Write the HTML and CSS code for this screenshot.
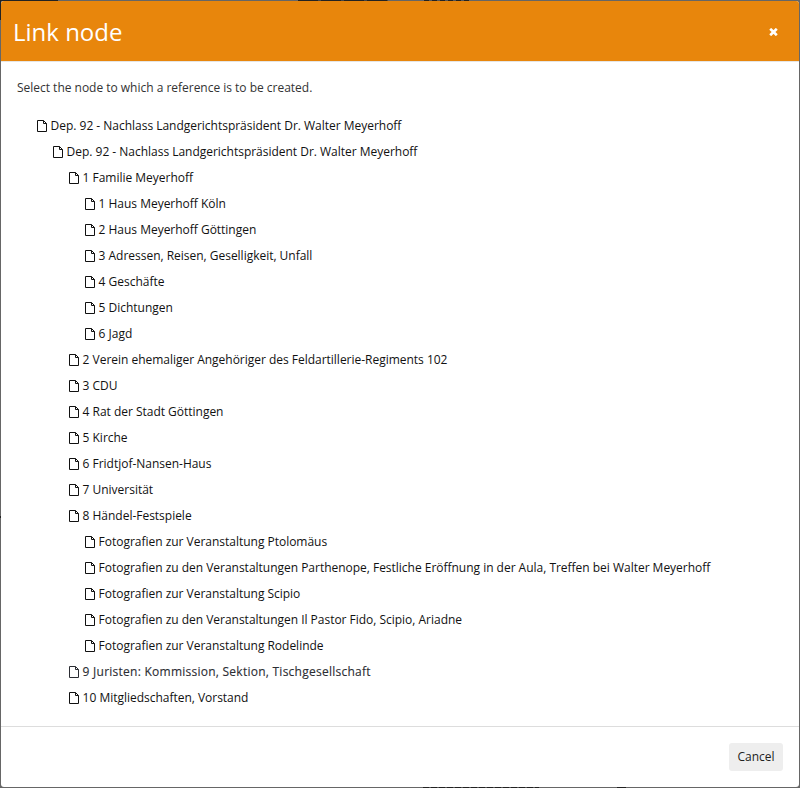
FILE: index.html
```
<!DOCTYPE html>
<html lang="en">
<head>
<meta charset="utf-8">
<title>Link node</title>
<link rel="stylesheet" href="styles.css">
</head>
<body>
<svg width="0" height="0" class="defs"><symbol id="file" viewBox="0 0 10 12"><path d="M.5 .5H6.5L9.5 3.5V11.5H.5ZM6.5 .5V3.5H9.5" fill="none" stroke="currentColor"/></symbol></svg>
<div class="modal">
  <header class="head"><h1>Link node</h1>
    <button class="close" aria-label="Close"><svg width="9" height="8" viewBox="0 0 9 8"><path d="M1.2 .8 7.8 7.2M7.8 .8 1.2 7.2" stroke="#fff" stroke-width="2.7"/></svg></button>
  </header>
  <main class="body">
    <p class="intro">Select the node to which a reference is to be created.</p>
    <ul class="tree">
      <li><a><svg class="icon"><use href="#file"/></svg>Dep. 92 - Nachlass Landgerichtspräsident Dr. Walter Meyerhoff</a>
      <ul><li><a><svg class="icon"><use href="#file"/></svg>Dep. 92 - Nachlass Landgerichtspräsident Dr. Walter Meyerhoff</a>
        <ul>
          <li><a><svg class="icon"><use href="#file"/></svg>1 Familie Meyerhoff</a>
            <ul>
              <li><a><svg class="icon"><use href="#file"/></svg>1 Haus Meyerhoff Köln</a></li>
              <li><a><svg class="icon"><use href="#file"/></svg>2 Haus Meyerhoff Göttingen</a></li>
              <li><a><svg class="icon"><use href="#file"/></svg>3 Adressen, Reisen, Geselligkeit, Unfall</a></li>
              <li><a><svg class="icon"><use href="#file"/></svg>4 Geschäfte</a></li>
              <li><a><svg class="icon"><use href="#file"/></svg>5 Dichtungen</a></li>
              <li><a><svg class="icon"><use href="#file"/></svg>6 Jagd</a></li>
            </ul></li>
          <li><a><svg class="icon"><use href="#file"/></svg>2 Verein ehemaliger Angehöriger des Feldartillerie-Regiments 102</a></li>
          <li><a><svg class="icon"><use href="#file"/></svg>3 CDU</a></li>
          <li><a><svg class="icon"><use href="#file"/></svg>4 Rat der Stadt Göttingen</a></li>
          <li><a><svg class="icon"><use href="#file"/></svg>5 Kirche</a></li>
          <li><a><svg class="icon"><use href="#file"/></svg>6 Fridtjof-Nansen-Haus</a></li>
          <li><a><svg class="icon"><use href="#file"/></svg>7 Universität</a></li>
          <li><a><svg class="icon"><use href="#file"/></svg>8 Händel-Festspiele</a>
            <ul>
              <li><a><svg class="icon"><use href="#file"/></svg>Fotografien zur Veranstaltung Ptolomäus</a></li>
              <li><a><svg class="icon"><use href="#file"/></svg>Fotografien zu den Veranstaltungen Parthenope, Festliche Eröffnung in der Aula, Treffen bei Walter Meyerhoff</a></li>
              <li><a><svg class="icon"><use href="#file"/></svg>Fotografien zur Veranstaltung Scipio</a></li>
              <li><a><svg class="icon"><use href="#file"/></svg>Fotografien zu den Veranstaltungen Il Pastor Fido, Scipio, Ariadne</a></li>
              <li><a><svg class="icon"><use href="#file"/></svg>Fotografien zur Veranstaltung Rodelinde</a></li>
            </ul></li>
          <li><a class="current"><svg class="icon"><use href="#file"/></svg>9 Juristen: Kommission, Sektion, Tischgesellschaft</a></li>
          <li><a><svg class="icon"><use href="#file"/></svg>10 Mitgliedschaften, Vorstand</a></li>
        </ul></li></ul></li>
    </ul>
  </main>
  <footer class="foot"><button class="cancel">Cancel</button></footer>
</div>
</body>
</html>
```
FILE: styles.css
```
* { box-sizing: border-box; }
body {
  margin: 0; height: 788px; padding: 1px; overflow: hidden;
  font: 12px/26px "Open Sans", sans-serif; color: #111;
  background:
    linear-gradient(#222, #222) 0 0 / 58px 1px no-repeat,
    repeating-linear-gradient(90deg, #222 0 20px, #444 20px 23px) 298px 0 / 90px 1px no-repeat,
    repeating-linear-gradient(90deg, #222 0 5px, #555 5px 8px) 424px 0 / 45px 1px no-repeat,
    repeating-linear-gradient(90deg, #222 0 6px, #555 6px 8px) 423px 787px / 116px 1px no-repeat,
    linear-gradient(#222, #222) 617px 787px / 9px 1px no-repeat,
    linear-gradient(#222, #222) 0 0 / 1px 20px no-repeat,
    linear-gradient(#222, #222) 0 516px / 1px 2px no-repeat,
    #666;
}
.defs { position: absolute; }
.modal { height: 786px; background: #fff; border-radius: 3px; overflow: hidden; display: flex; flex-direction: column; }
.head { height: 61px; background: #e8860c; color: #fff; border-bottom: 1px solid #e5e5e5; display: flex; justify-content: space-between; align-items: center; padding: 2px 21px 0 12px; }
h1 { margin: 0; font-size: 24px; font-weight: 400; line-height: 32px; }
.close { border: 0; padding: 0; background: none; display: flex; }
.body { flex: 1; padding: 13px 16px 0; }
.intro { margin: 0; color: #333; letter-spacing: -.015px; }
ul { list-style: none; margin: 0; padding: 0 0 0 16px; }
.tree { margin-top: 12px; padding-left: 20px; }
a { display: flex; align-items: center; height: 26px; white-space: nowrap; letter-spacing: -.018px; }
.icon { width: 10px; height: 12px; margin: 0 3.6px 0 0; flex: none; }
.current { color: #2b2d33; letter-spacing: .25px; -webkit-text-stroke: .12px #2b2d33; }
.foot { height: 61px; border-top: 1px solid #ddd; padding: 16px; display: flex; justify-content: flex-end; align-items: flex-start; }
.cancel { width: 54px; height: 28px; border: 0; border-radius: 3px; background: #eee; color: #222; padding: 0; font: 12px/28px "Open Sans", sans-serif; }
```
